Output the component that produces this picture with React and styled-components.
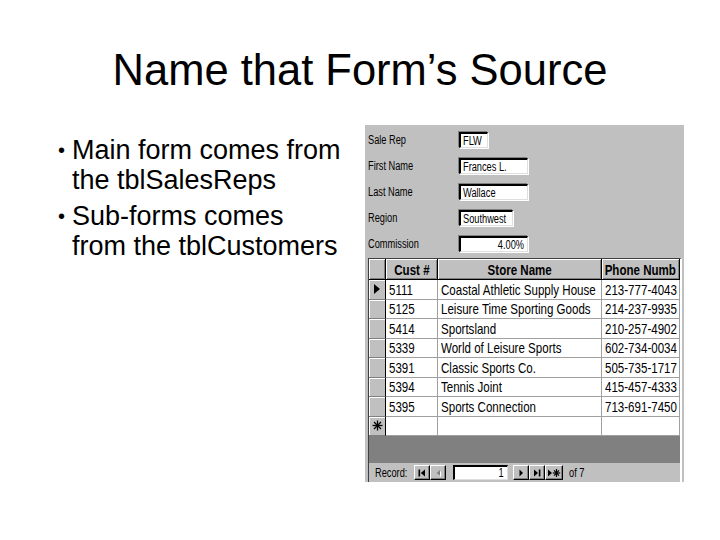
import React from "react";
import styled, { createGlobalStyle } from "styled-components";

const GlobalStyle = createGlobalStyle`
  html, body {
    margin: 0;
    padding: 0;
    background: #fff;
  }
  body {
    font-family: "Liberation Sans", Arial, sans-serif;
    color: #000;
  }
`;

const customers = [
  { id: "5111", name: "Coastal Athletic Supply House", phone: "213-777-4043" },
  { id: "5125", name: "Leisure Time Sporting Goods", phone: "214-237-9935" },
  { id: "5414", name: "Sportsland", phone: "210-257-4902" },
  { id: "5339", name: "World of Leisure Sports", phone: "602-734-0034" },
  { id: "5391", name: "Classic Sports Co.", phone: "505-735-1717" },
  { id: "5394", name: "Tennis Joint", phone: "415-457-4333" },
  { id: "5395", name: "Sports Connection", phone: "713-691-7450" },
];

const fields = [
  { label: "Sale Rep", value: "FLW", width: 29 },
  { label: "First Name", value: "Frances L.", width: 69 },
  { label: "Last Name", value: "Wallace", width: 69 },
  { label: "Region", value: "Southwest", width: 54 },
  { label: "Commission", value: "4.00%", width: 69, right: true },
];

// the old Access screenshot text is squeezed sideways, so scale it the same way
const Narrow = ({ children, origin }) => <Squeeze $origin={origin}>{children}</Squeeze>;

const App = () => {
  return (
    <Slide>
      <GlobalStyle />
      <Title>Name that Form’s Source</Title>
      <Body>
        <Bullets>
          <Item>
            <Dot>•</Dot>
            <span>
              Main form comes from
              <br />
              the tblSalesReps
            </span>
          </Item>
          <Item>
            <Dot>•</Dot>
            <span>
              Sub-forms comes
              <br />
              from the tblCustomers
            </span>
          </Item>
        </Bullets>

        <FormPanel>
          {fields.map((f) => (
            <FieldRow key={f.label}>
              <Label>
                <Narrow>{f.label}</Narrow>
              </Label>
              <TextBox $w={f.width} $right={f.right}>
                <Narrow origin={f.right ? "right" : "left"}>{f.value}</Narrow>
              </TextBox>
            </FieldRow>
          ))}

          <SubForm>
            <Sheet>
              <HeadRow>
                <HeadCell />
                <HeadCell>
                  <Narrow origin="center">Cust #</Narrow>
                </HeadCell>
                <HeadCell>
                  <Narrow origin="center">Store Name</Narrow>
                </HeadCell>
                <HeadCell>
                  <Narrow origin="center">Phone Numb</Narrow>
                </HeadCell>
              </HeadRow>
              {customers.map((c, i) => (
                <DataRow key={c.id}>
                  <Selector>
                    {i === 0 && (
                      <svg width="8" height="10" viewBox="0 0 8 10">
                        <polygon points="1,0 7,5 1,10" fill="#000" />
                      </svg>
                    )}
                  </Selector>
                  <Cell>
                    <Narrow>{c.id}</Narrow>
                  </Cell>
                  <Cell>
                    <Narrow>{c.name}</Narrow>
                  </Cell>
                  <Cell>
                    <Narrow>{c.phone}</Narrow>
                  </Cell>
                </DataRow>
              ))}
              <DataRow>
                <Selector>
                  <svg width="11" height="11" viewBox="0 0 11 11">
                    <g stroke="#000" strokeWidth="1.3">
                      <line x1="5.5" y1="0.5" x2="5.5" y2="10.5" />
                      <line x1="0.5" y1="5.5" x2="10.5" y2="5.5" />
                      <line x1="2" y1="2" x2="9" y2="9" />
                      <line x1="9" y1="2" x2="2" y2="9" />
                    </g>
                  </svg>
                </Selector>
                <Cell />
                <Cell />
                <Cell />
              </DataRow>
            </Sheet>
            <Filler />
            <NavBar>
              <NavLabel>
                <Narrow>Record:</Narrow>
              </NavLabel>
              <NavButton>
                <svg width="10" height="10" viewBox="0 0 10 10">
                  <rect x="1.5" y="1.5" width="1.6" height="7" fill="#000" />
                  <polygon points="8,1.5 3.8,5 8,8.5" fill="#000" />
                </svg>
              </NavButton>
              <NavButton>
                <svg width="10" height="10" viewBox="0 0 10 10">
                  <polygon points="7,2 3.6,5 7,8" fill="#fff" transform="translate(1,1)" />
                  <polygon points="7,2 3.6,5 7,8" fill="#808080" />
                </svg>
              </NavButton>
              <RecordBox>
                <Narrow origin="right">1</Narrow>
              </RecordBox>
              <NavButton>
                <svg width="10" height="10" viewBox="0 0 10 10">
                  <polygon points="3.5,1.5 7,5 3.5,8.5" fill="#000" />
                </svg>
              </NavButton>
              <NavButton>
                <svg width="10" height="10" viewBox="0 0 10 10">
                  <polygon points="2,1.5 6,5 2,8.5" fill="#000" />
                  <rect x="6.8" y="1.5" width="1.6" height="7" fill="#000" />
                </svg>
              </NavButton>
              <NavButton $wide>
                <svg width="14" height="10" viewBox="0 0 14 10">
                  <polygon points="1,1.5 5,5 1,8.5" fill="#000" />
                  <g stroke="#000" strokeWidth="1.2">
                    <line x1="9.5" y1="1" x2="9.5" y2="9" />
                    <line x1="5.8" y1="5" x2="13.2" y2="5" />
                    <line x1="7" y1="2.4" x2="12" y2="7.6" />
                    <line x1="12" y1="2.4" x2="7" y2="7.6" />
                  </g>
                </svg>
              </NavButton>
              <OfText>
                <Narrow>of 7</Narrow>
              </OfText>
            </NavBar>
          </SubForm>
        </FormPanel>
      </Body>
    </Slide>
  );
};

const Slide = styled.div`
  width: 720px;
  height: 540px;
  overflow: hidden;
  background: #fff;
`;

const Title = styled.h1`
  margin: 0;
  padding-top: 46px;
  font-size: 43.5px;
  line-height: 48px;
  font-weight: normal;
  text-align: center;
`;

const Body = styled.div`
  display: flex;
  margin-top: 31px;
`;

const Bullets = styled.ul`
  list-style: none;
  margin: 0;
  padding: 10px 0 0 58px;
  width: 307px;
  flex: none;
`;

const Item = styled.li`
  display: flex;
  font-size: 27px;
  line-height: 30px;
  margin-bottom: 6px;
  white-space: nowrap;
`;

const Dot = styled.span`
  width: 14px;
  flex: none;
  font-size: 20px;
`;

const Squeeze = styled.span`
  display: inline-block;
  white-space: nowrap;
  transform: scaleX(0.77);
  transform-origin: ${(p) => p.$origin || "left"} center;
`;

const FormPanel = styled.div`
  width: 316px;
  height: 350px;
  padding: 7px 0 0 3px;
  background: #c0c0c0;
  display: flex;
  flex-direction: column;
  font-size: 12px;
`;

const FieldRow = styled.div`
  display: flex;
  align-items: center;
  height: 16px;
  margin-bottom: 10px;
`;

const Label = styled.div`
  width: 91px;
  flex: none;
  overflow: hidden;
`;

const TextBox = styled.div`
  box-sizing: border-box;
  width: ${(p) => p.$w}px;
  height: 16px;
  background: #fff;
  border-style: solid;
  border-width: 2px 1px 1px 2px;
  border-color: #000 #dfdfdf #dfdfdf #000;
  box-shadow: -1px -1px 0 #808080, 1px 1px 0 #fff;
  padding: 0 3px 0 2px;
  display: flex;
  align-items: center;
  justify-content: ${(p) => (p.$right ? "flex-end" : "flex-start")};
  overflow: hidden;
`;

const SubForm = styled.div`
  flex: 1;
  margin-top: -4px;
  width: 314px;
  box-sizing: border-box;
  border-style: solid;
  border-width: 1px 2px 0 1px;
  border-color: #404040 #fff #404040 #404040;
  display: flex;
  flex-direction: column;
  background: #c0c0c0;
`;

const Sheet = styled.div`
  display: flex;
  flex-direction: column;
  width: 311px;
`;

const HeadRow = styled.div`
  display: grid;
  grid-template-columns: 17px 52px 164px 78px;
  height: 21px;
`;

const HeadCell = styled.div`
  box-sizing: border-box;
  background: #c0c0c0;
  border-right: 1px solid #000;
  border-bottom: 1px solid #000;
  box-shadow: inset 1px 1px 0 #fff, inset -1px -1px 0 #808080;
  font-size: 15px;
  font-weight: bold;
  display: flex;
  align-items: center;
  justify-content: center;
  overflow: hidden;
`;

const DataRow = styled.div`
  display: grid;
  grid-template-columns: 17px 52px 164px 78px;
  height: 19.5px;
`;

const Selector = styled.div`
  box-sizing: border-box;
  background: #c0c0c0;
  border-right: 1px solid #000;
  border-bottom: 1px solid #808080;
  box-shadow: inset 1px 1px 0 #fff;
  display: flex;
  align-items: center;
  justify-content: center;
`;

const Cell = styled.div`
  box-sizing: border-box;
  background: #fff;
  border-right: 1px solid #a0a0a0;
  border-bottom: 1px solid #a0a0a0;
  padding-left: 3px;
  font-size: 15px;
  display: flex;
  align-items: center;
  overflow: hidden;
`;

const Filler = styled.div`
  flex: 1;
  background: #808080;
`;

const NavBar = styled.div`
  height: 19px;
  display: flex;
  align-items: center;
  background: #c0c0c0;
  padding-left: 6px;
`;

const NavLabel = styled.span`
  margin-right: -3px;
`;

const NavButton = styled.div`
  box-sizing: border-box;
  flex: none;
  width: ${(p) => (p.$wide ? 18 : 16)}px;
  height: 15px;
  background: #c0c0c0;
  border-style: solid;
  border-width: 1px;
  border-color: #fff #000 #000 #fff;
  box-shadow: inset -1px -1px 0 #808080;
  display: flex;
  align-items: center;
  justify-content: center;
`;

const RecordBox = styled.div`
  box-sizing: border-box;
  flex: none;
  width: 55px;
  height: 15px;
  margin: 0 5px 0 7px;
  background: #fff;
  border-style: solid;
  border-width: 2px 1px 1px 2px;
  border-color: #000 #dfdfdf #dfdfdf #000;
  padding-right: 3px;
  display: flex;
  align-items: center;
  justify-content: flex-end;
`;

const OfText = styled.span`
  margin-left: 6px;
`;

export default App;
